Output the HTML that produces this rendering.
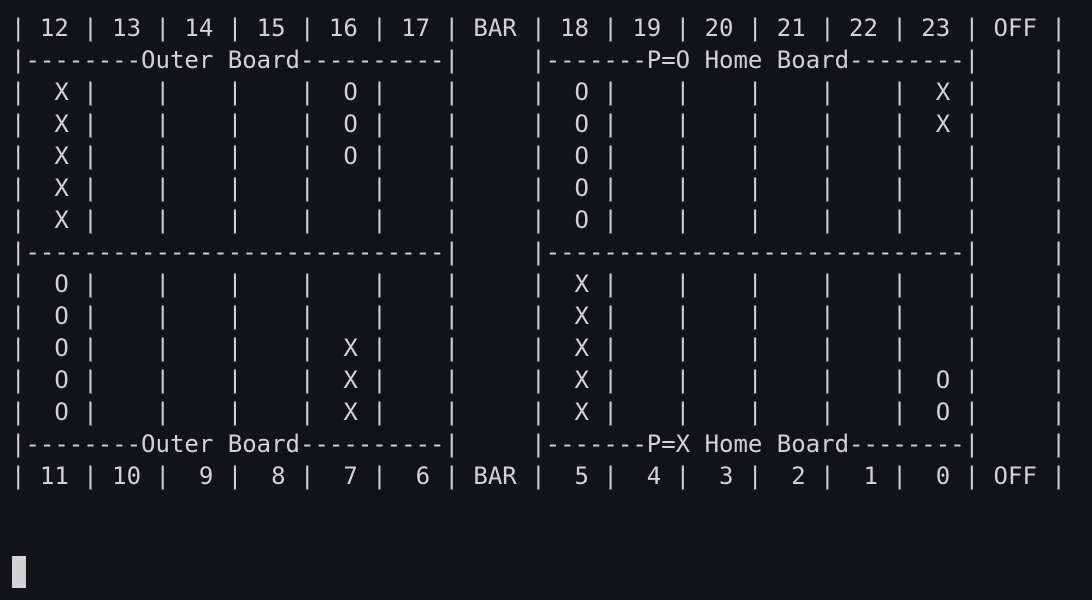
<!DOCTYPE html>
<html><head><meta charset="utf-8"><style>
html,body{margin:0;padding:0;background:#121316;width:1092px;height:600px;overflow:hidden}
pre{position:absolute;left:11px;top:12px;margin:0;font-family:"DejaVu Sans Mono","Liberation Mono",monospace;font-size:24px;line-height:32px;color:#d2d2d2;white-space:pre}
.cur{position:absolute;left:12px;top:556px;width:14px;height:32px;background:#d2d2d2}
</style></head><body>
<pre>| 12 | 13 | 14 | 15 | 16 | 17 | BAR | 18 | 19 | 20 | 21 | 22 | 23 | OFF |
|--------Outer Board----------|     |-------P=O Home Board--------|     |
|  X |    |    |    |  O |    |     |  O |    |    |    |    |  X |     |
|  X |    |    |    |  O |    |     |  O |    |    |    |    |  X |     |
|  X |    |    |    |  O |    |     |  O |    |    |    |    |    |     |
|  X |    |    |    |    |    |     |  O |    |    |    |    |    |     |
|  X |    |    |    |    |    |     |  O |    |    |    |    |    |     |
|-----------------------------|     |-----------------------------|     |
|  O |    |    |    |    |    |     |  X |    |    |    |    |    |     |
|  O |    |    |    |    |    |     |  X |    |    |    |    |    |     |
|  O |    |    |    |  X |    |     |  X |    |    |    |    |    |     |
|  O |    |    |    |  X |    |     |  X |    |    |    |    |  O |     |
|  O |    |    |    |  X |    |     |  X |    |    |    |    |  O |     |
|--------Outer Board----------|     |-------P=X Home Board--------|     |
| 11 | 10 |  9 |  8 |  7 |  6 | BAR |  5 |  4 |  3 |  2 |  1 |  0 | OFF |</pre>
<div class="cur"></div>
</body></html>
